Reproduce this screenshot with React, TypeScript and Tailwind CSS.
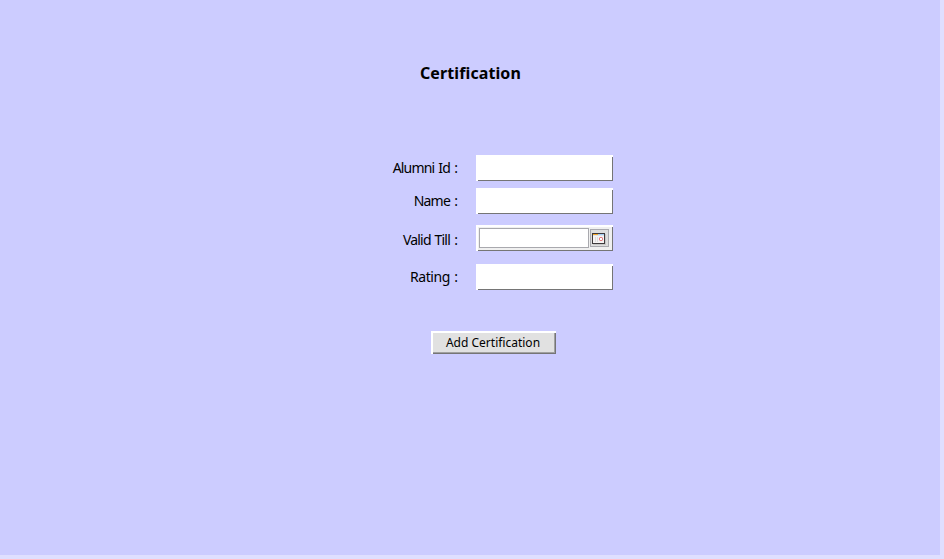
import React from "react";

function Bevel({ children }: { children?: React.ReactNode }) {
  return (
    <div className="h-[26px] w-[137px] bg-white pl-[2px] pt-[2px]">
      <div className="h-full w-full border-b border-r border-[#757575]">{children}</div>
    </div>
  );
}

function TextField({ label }: { label: string }) {
  return (
    <Bevel>
      <input aria-label={label} className="block h-full w-full bg-transparent px-1 text-sm outline-none" />
    </Bevel>
  );
}

function FieldLabel({ text, className }: { text: string; className: string }) {
  return (
    <label className={`flex justify-end whitespace-pre [word-spacing:1px] ${className}`}>
      <span>{text}</span>
      <span className="w-[8px] text-right tracking-normal">:</span>
    </label>
  );
}

function CalendarIcon() {
  return (
    <svg width="14" height="12" viewBox="0 0 14 12" shapeRendering="crispEdges">
      <rect x="1" y="1" width="13" height="11" fill="#c6c6c6" />
      <rect width="13" height="11" fill="#3e3a3c" />
      <rect x="1" y="1" width="11" height="9" fill="#f6f3f3" />
      <rect x="1" y="1" width="5" height="1" fill="#f5a82c" />
      <rect x="6" y="1" width="6" height="1" fill="#a4cdf2" />
      <rect x="1" y="2" width="11" height="1" fill="#dce4ec" />
      <path d="M3.5 4v5M5.5 4v5" stroke="#dddddd" />
      <rect x="7.5" y="4.5" width="3" height="3" rx="1" fill="#ffffff" stroke="#e05a5e" shapeRendering="auto" />
    </svg>
  );
}

function DateField() {
  return (
    <Bevel>
      <div className="flex h-full w-full gap-px bg-[#f0f0f0] pl-px pt-px">
        <input
          aria-label="Valid Till"
          className="block h-[20px] w-[110px] border border-[#a9a9ae] bg-white px-1 text-sm outline-none"
        />
        <button
          aria-label="Choose date"
          className="mt-px flex h-[18px] w-[19px] items-start justify-start border border-[#a9a9ae] bg-[#dedede] pl-px pt-[3px]"
        >
          <CalendarIcon />
        </button>
      </div>
    </Bevel>
  );
}

export default function App() {
  return (
    <div className="h-[559px] w-[944px] overflow-hidden bg-[#dfdfff] font-['Noto_Sans','Open_Sans',sans-serif] text-black">
      <main className="h-[555px] w-[940px] bg-[#ccccff] pt-[61px]">
        <h1 className="h-6 pl-[420px] text-[16px] font-bold leading-6 tracking-[0.1px]">Certification</h1>
        <form className="pt-[70px]" onSubmit={(e) => e.preventDefault()}>
          <div className="grid grid-cols-[458px_137px] gap-x-[18px] text-[14px] leading-[26px]">
            <FieldLabel text="Alumni Id" className="h-[33px] tracking-[-0.8px]" />
            <TextField label="Alumni Id" />
            <FieldLabel text="Name" className="h-[37px] tracking-[-0.8px]" />
            <TextField label="Name" />
            <FieldLabel text="Valid Till" className="h-[39px] pt-[2px] tracking-[-0.8px]" />
            <DateField />
            <FieldLabel text="Rating" className="h-[26px] tracking-[-0.4px]" />
            <TextField label="Rating" />
          </div>
          <div className="pl-[431px] pt-[41px]">
            <button className="block h-[23px] w-[125px] bg-white pl-[2px] pt-[2px] text-[12px] leading-[20px]">
              <span className="block h-full w-full border-b border-r border-[#757575]">
                <span className="block h-full w-full border-b border-r border-[#a0a0a0] bg-[#e1e1e1] pr-px">
                  Add Certification
                </span>
              </span>
            </button>
          </div>
        </form>
      </main>
    </div>
  );
}
